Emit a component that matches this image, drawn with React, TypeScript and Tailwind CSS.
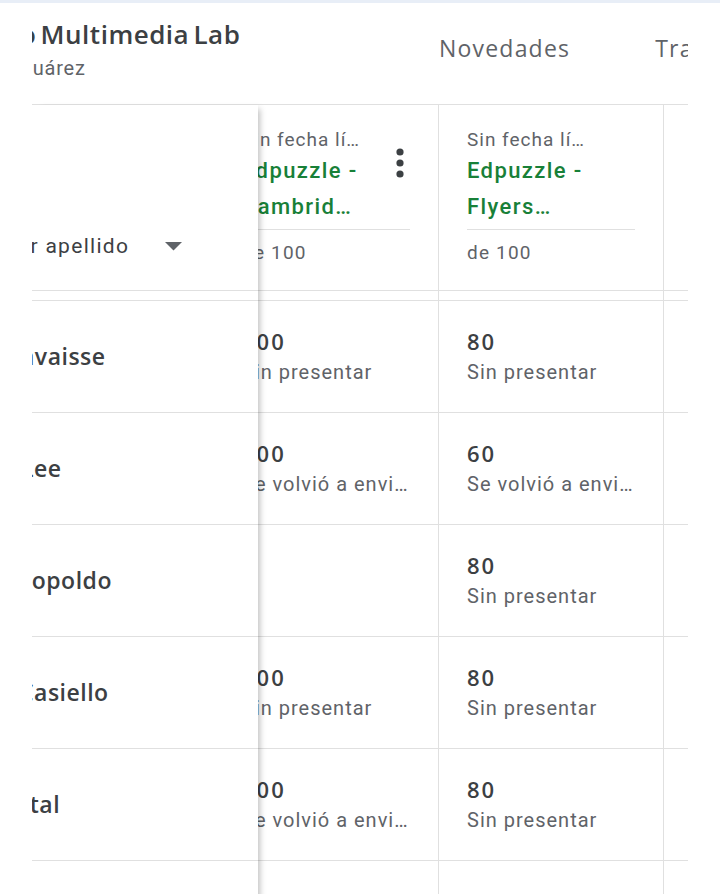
const gsans = "font-['Open_Sans','Noto_Sans',sans-serif]";
const roboto = "font-['Roboto','Liberation_Sans',sans-serif]";

// columns of the grade table; the first one sits partly under the sticky student column
const assignments = [
  { id: "cambridge", due: "Sin fecha límite", title: "Edpuzzle - Cambridge Movers", points: "de 100", menu: true },
  { id: "flyers", due: "Sin fecha límite", title: "Edpuzzle - Flyers Listening", points: "de 100", menu: false },
  { id: "next", due: "", title: "", points: "", menu: false },
];

type Grade = { score: string; status: string } | null;

const students: { name: string; shift: string; grades: Grade[] }[] = [
  {
    name: "Lavaisse",
    shift: "-ml-[24px]",
    grades: [
      { score: "100", status: "Sin presentar" },
      { score: "80", status: "Sin presentar" },
      null,
    ],
  },
  {
    name: "Lee",
    shift: "-ml-[11px]",
    grades: [
      { score: "100", status: "Se volvió a enviar" },
      { score: "60", status: "Se volvió a enviar" },
      null,
    ],
  },
  {
    name: "Leopoldo",
    shift: "-ml-[27px]",
    grades: [null, { score: "80", status: "Sin presentar" }, null],
  },
  {
    name: "Casiello",
    shift: "-ml-[13px]",
    grades: [
      { score: "100", status: "Sin presentar" },
      { score: "80", status: "Sin presentar" },
      null,
    ],
  },
  {
    name: "Vital",
    shift: "-ml-[24px]",
    grades: [
      { score: "100", status: "Se volvió a enviar" },
      { score: "80", status: "Sin presentar" },
      null,
    ],
  },
  { name: "", shift: "", grades: [null, null, null] },
];

function GradeCell({ grade }: { grade: Grade }) {
  return (
    <div className="h-[112px] border-b border-r border-[#e0e0e0] px-[28px] flex flex-col justify-center">
      {grade && (
        <>
          <div className={`${gsans} text-[22px] leading-[30px] font-semibold text-[#3c4043] tracking-[2px]`}>
            {grade.score}
          </div>
          <div className={`${roboto} text-[20px] leading-[32px] text-[#5f6368] tracking-[1px] truncate w-[168px]`}>
            {grade.status}
          </div>
        </>
      )}
    </div>
  );
}

function MoreIcon() {
  return (
    <svg width="8" height="30" viewBox="0 0 8 30" className="absolute left-[182px] top-[43px]">
      <circle cx="4" cy="4" r="3.6" fill="#3c4043" />
      <circle cx="4" cy="15" r="3.6" fill="#3c4043" />
      <circle cx="4" cy="26" r="3.6" fill="#3c4043" />
    </svg>
  );
}

export default function App() {
  return (
    <div className="w-[720px] h-[894px] bg-white overflow-hidden">
      <div className="h-[3px] bg-[#e8eef7]" />
      <div className="ml-[32px] w-[656px] overflow-hidden">
        {/* class header with tabs */}
        <div className="h-[102px] border-b border-[#e0e0e0] flex">
          <div className="w-[407px] shrink-0 pt-[11px]">
            <div className={`${gsans} text-[26px] leading-[40px] font-semibold text-[#3c4043] tracking-[0.5px] [word-spacing:-3px] whitespace-nowrap -ml-[12px]`}>
              o Multimedia Lab
            </div>
            <div className={`${roboto} text-[20px] leading-[28px] text-[#5f6368] tracking-[0.8px] whitespace-nowrap -ml-[12px]`}>
              Suárez
            </div>
          </div>
          <div className={`${gsans} flex gap-[85px] pt-[26px] text-[23px] leading-[38px] font-medium text-[#5f6368] tracking-[1.2px] whitespace-nowrap`}>
            <span>Novedades</span>
            <span>Trabajo de clase</span>
          </div>
        </div>

        {/* grade table */}
        <div className="flex">
          <div className="w-[226px] shrink-0 relative z-10 bg-white shadow-[6px_0_6px_-4px_rgba(0,0,0,0.25)]">
            <div className="h-[186px] border-b border-[#e0e0e0] flex items-end pb-[28px]">
              <div className={`${roboto} flex items-center text-[21px] leading-[32px] text-[#3c4043] whitespace-nowrap -ml-[118px]`}>
                <span className="tracking-[1.3px]">Ordenar por apellido</span>
                <svg width="17" height="9" viewBox="0 0 17 9" className="ml-[36px]">
                  <path d="M0 0h17L8.5 8.5z" fill="#5f6368" />
                </svg>
              </div>
            </div>
            <div className="h-[10px] border-b border-[#e0e0e0]" />
            {students.map((s, i) => (
              <div key={i} className="h-[112px] border-b border-[#e0e0e0] flex items-center">
                <span className={`${gsans} text-[23px] font-semibold text-[#3c4043] whitespace-nowrap tracking-[0.5px] ${s.shift}`}>
                  {s.name}
                </span>
              </div>
            ))}
          </div>

          {assignments.map((a, col) => (
            <div key={a.id} className={`w-[225px] shrink-0 ${col === 0 ? "-ml-[44px]" : ""}`}>
              <div className="h-[186px] border-b border-r border-[#e0e0e0] px-[28px] pt-[22px] relative">
                {a.title && (
                  <>
                    <div className={`${roboto} text-[19px] leading-[26px] text-[#5f6368] truncate w-[126px] tracking-[1px]`}>
                      {a.due}
                    </div>
                    <div className="pb-[4px] border-b border-[#e0e0e0]">
                      <div className={`${roboto} text-[22px] leading-[36px] font-medium text-[#188038] line-clamp-2 w-[120px] tracking-[1.4px]`}>
                        {a.title}
                      </div>
                    </div>
                    <div className={`${roboto} text-[19px] leading-[26px] text-[#5f6368] pt-[10px] tracking-[1.2px]`}>
                      {a.points}
                    </div>
                  </>
                )}
                {a.menu && <MoreIcon />}
              </div>
              <div className="h-[10px] border-b border-r border-[#e0e0e0]" />
              {students.map((s, i) => (
                <GradeCell key={i} grade={s.grades[col]} />
              ))}
            </div>
          ))}
        </div>
      </div>
    </div>
  );
}
